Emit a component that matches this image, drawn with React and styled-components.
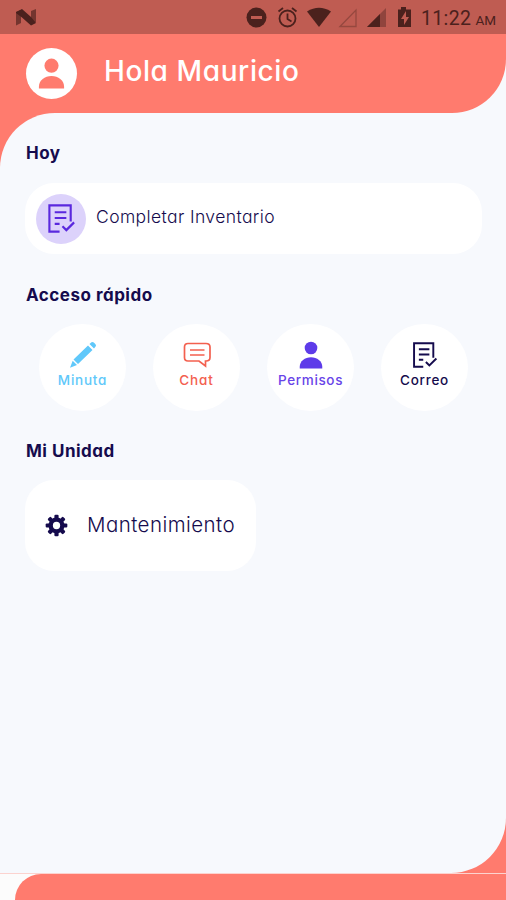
import React from 'react';
import styled, { createGlobalStyle } from 'styled-components';

const coral = '#ff7b6e';
const mist = '#f7f9fd';
const navy = '#150b4d';

const GlobalStyle = createGlobalStyle`
  * { box-sizing: border-box; }
  body { margin: 0; background: ${mist}; }
`;

const Screen = styled.div`
  width: 506px;
  height: 900px;
  overflow: hidden;
  display: flex;
  flex-direction: column;
  background: ${mist};
  color: ${navy};
  font-family: Inter, "Open Sans", sans-serif;
  font-feature-settings: "cv11", "ss03";
`;

const StatusBar = styled.div`
  height: 34px;
  flex: none;
  display: flex;
  align-items: center;
  padding: 0 10px 0 16px;
  background: #bf5c52;
  color: #4b211d;
`;

const StatusIcons = styled.svg`
  width: 170px;
  height: 34px;
  margin-left: auto;
`;

const Clock = styled.div`
  display: flex;
  align-items: baseline;
  justify-content: space-between;
  width: 75px;
  margin-left: 5px;
  padding-top: 3px;
  font-family: Roboto, sans-serif;
  white-space: nowrap;
`;

const Time = styled.span`
  font-size: 19.5px;
  letter-spacing: 0.35px;
`;

const Meridiem = styled.span`
  font-size: 13.5px;
`;

const Header = styled.header`
  height: 79px;
  flex: none;
  display: flex;
  align-items: center;
  padding: 0 26px;
  gap: 27px;
  background: ${coral};
  border-bottom-right-radius: 54px;
`;

const Greeting = styled.h1`
  margin: -5px 0 0;
  color: #fff;
  font-size: 28px;
  font-weight: 500;
  letter-spacing: ${({ $track }) => $track}px;
`;

const Backdrop = styled.div`
  height: 760px;
  flex: none;
  background: linear-gradient(${coral}, ${coral}) left top / 60px 60px no-repeat,
    linear-gradient(${coral}, ${coral}) right bottom / 60px 60px no-repeat;
`;

const Panel = styled.main`
  height: 760px;
  padding: 28px 25px 0;
  background: ${mist};
  border-radius: 55px 0 55px 0;
`;

const SectionTitle = styled.h2`
  margin: 0;
  height: 24px;
  line-height: 24px;
  padding-left: 1px;
  font-size: 17px;
  font-weight: 700;
  letter-spacing: ${({ $track }) => $track}px;
`;

const TaskCard = styled.div`
  height: 71px;
  margin: 18px -1px 29px 0;
  padding: 0 11px;
  display: flex;
  align-items: center;
  gap: 10px;
  border-radius: 29px;
  background: #fff;
`;

const Round = styled.div`
  width: ${({ $size }) => $size}px;
  height: ${({ $size }) => $size}px;
  flex: none;
  display: flex;
  align-items: center;
  justify-content: center;
  border-radius: 50%;
  background: ${({ $fill }) => $fill || '#fff'};
`;

const ItemLabel = styled.span`
  margin-top: ${({ $shift }) => $shift}px;
  font-size: ${({ $size }) => $size}px;
  font-weight: 300;
  letter-spacing: ${({ $track }) => $track}px;
`;

const Shortcuts = styled.div`
  display: flex;
  justify-content: space-between;
  margin: 17px 13px 28px 14px;
`;

const Shortcut = styled.button`
  width: 87px;
  height: 87px;
  display: flex;
  flex-direction: column;
  align-items: center;
  gap: 1px;
  padding: 17px 0 0;
  border: 0;
  border-radius: 50%;
  background: #fff;
  color: ${({ $color }) => $color};
  font: 500 13.5px/20px Inter, sans-serif;
  font-feature-settings: "cv11";
  letter-spacing: ${({ $track }) => $track}px;

  svg { height: 28px; }
`;

const UnitCard = styled.div`
  width: 231px;
  height: 91px;
  margin-top: 17px;
  padding-left: 20px;
  display: flex;
  align-items: center;
  gap: 19px;
  border-radius: 29px;
  background: #fff;
`;

const Footer = styled.footer`
  height: 27px;
  flex: none;
  padding-left: 15px;
  border-top: 1px solid #fcd3cf;
  background: linear-gradient(${coral}, ${coral}) right / 50px 100% no-repeat #fcfcfc;
`;

const FooterBar = styled.div`
  height: 26px;
  border-top-left-radius: 26px;
  background: ${coral};
`;

const Person = ({ size, color }) => (
  <svg width={size} height={size} viewBox="0 0 30 32" fill={color}>
    <circle cx="15" cy="7.9" r="7.3" />
    <path d="M2 31.500v-1.800C2 23 8 18.600 15 18.600s13 4.400 13 11.100v1.800z" />
  </svg>
);

const NoteCheck = ({ size, color }) => (
  <svg width={size} height={size} viewBox="0 0 30 32" fill="none" stroke={color} strokeWidth="2.200">
    <path d="M13 29.500H2.500V2.500H24.500V19M8 9.500H20M8 15.500H20M8 21.500H13M16 24L20 28L28 20" />
  </svg>
);

const Pencil = () => (
  <svg width="28" height="28" viewBox="0 0 28 28" fill="#60c8fa">
    <path d="M19 4.500l4.500 4.500L9 23 4.500 18.500zM20.500 3L22.500 1.200Q23.700.5 24.800 1.500L26.500 3.200Q27.500 4.500 26.600 5.600L25 7.500zM3.700 19.700L8 24 1 26.800z" />
  </svg>
);

const Chat = () => (
  <svg width="28" height="28" viewBox="0 0 28 28" fill="none" stroke="#f3604f" strokeWidth="1.700">
    <path d="M5 2.500H23Q27 2.500 27 6V16.500Q27 20 23 20H22.500V25L16 20H5Q1.500 20 1.500 16.500V6Q1.500 2.500 5 2.500zM7 9H21.500M7 14H21.500" />
  </svg>
);

const Gear = () => (
  <svg width="23" height="23" viewBox="-12 -12 24 24" fill={navy}>
    {[0, 45, 90, 135].map((angle) => (
      <rect key={angle} x="-2.200" y="-11.300" width="4.400" height="22.600" rx="1.200" transform={`rotate(${angle})`} />
    ))}
    <circle r="8.300" />
    <circle r="3.800" fill="#fff" />
  </svg>
);

const shortcuts = [
  { label: 'Minuta', color: '#60c8fa', track: 0.75, icon: <Pencil /> },
  { label: 'Chat', color: '#f3604f', track: 0.9, icon: <Chat /> },
  { label: 'Permisos', color: '#6844e8', track: 0.65, icon: <Person size={26} color="#5d3be9" /> },
  { label: 'Correo', color: navy, track: 0.75, icon: <NoteCheck size={28} color={navy} /> },
];

export default function App() {
  return (
    <Screen>
      <GlobalStyle />
      <StatusBar>
        <svg width="20" height="17" viewBox="0 0 20 17" fill="currentColor">
          <path opacity=".65" d="M0 3l5-2v13l-5 2.500zM15 2l5-2v13l-5 3z" />
          <path d="M0 3l6-3 9 8 5 6-5 2.500-9-8L0 4z" />
        </svg>
        <StatusIcons viewBox="0 0 170 34" fill="currentColor">
          <circle cx="10.500" cy="17.500" r="10" />
          <path d="M5 16h11v3H5z" fill="#bf5c52" />
          <g fill="none" stroke="currentColor" strokeWidth="1.800">
            <circle cx="41.500" cy="18.500" r="8" />
            <path d="M41.500 13.500V19L45.500 21.500M32.500 11.500L37 8M46 8l4.500 3.500" />
          </g>
          <path d="M61 11.500Q73 4 85 11.500L73 27z" />
          <path d="M94 26.500L110 10V26.500z" fill="none" stroke="#96483f" strokeWidth="1.300" />
          <path d="M121 27L140 8V27z" opacity=".4" />
          <path d="M121 27L134 14V27z" />
          <path d="M152 9.500h3V7h5v2.500h5V27h-13z" />
          <path d="M160 11l-5 8h3v6l5-8h-3z" fill="#bf5c52" />
        </StatusIcons>
        <Clock><Time>11:22</Time><Meridiem>AM</Meridiem></Clock>
      </StatusBar>
      <Header>
        <Round $size={51}><Person size={31} color={coral} /></Round>
        <Greeting $track={0.6}>Hola Mauricio</Greeting>
      </Header>
      <Backdrop>
        <Panel>
          <SectionTitle $track={0.5}>Hoy</SectionTitle>
          <TaskCard>
            <Round $size={50} $fill="#dcd2fb"><NoteCheck size={31} color="#5a28de" /></Round>
            <ItemLabel $size={17.5} $track={0.4} $shift={-5}>Completar Inventario</ItemLabel>
          </TaskCard>
          <SectionTitle $track={0.5}>Acceso rápido</SectionTitle>
          <Shortcuts>
            {shortcuts.map(({ label, color, track, icon }) => (
              <Shortcut key={label} $color={color} $track={track}>{icon}{label}</Shortcut>
            ))}
          </Shortcuts>
          <SectionTitle $track={0.5}>Mi Unidad</SectionTitle>
          <UnitCard>
            <Gear />
            <ItemLabel $size={20.5} $track={0.45} $shift={-2}>Mantenimiento</ItemLabel>
          </UnitCard>
        </Panel>
      </Backdrop>
      <Footer><FooterBar /></Footer>
    </Screen>
  );
}
